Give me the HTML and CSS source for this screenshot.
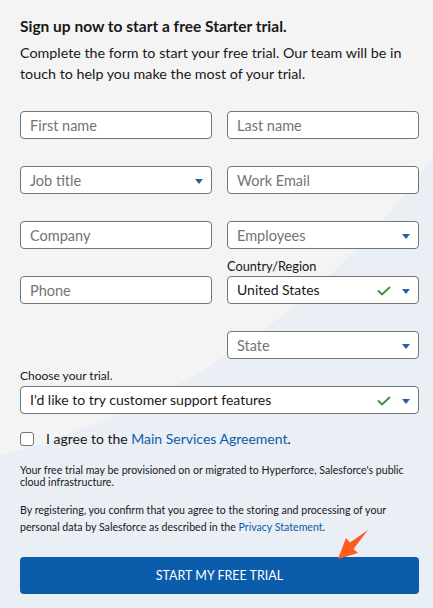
FILE: index.html
```html
<!DOCTYPE html>
<html lang="en">
<head>
<meta charset="utf-8">
<title>Sign up</title>
<link rel="stylesheet" href="styles.css">
</head>
<body>
<div class="page">
  <h1 class="title">Sign up now to start a free Starter trial.</h1>
  <p class="intro">Complete the form to start your free trial. Our team will be in touch to help you make the most of your trial.</p>

  <div class="row">
    <div class="field"><div class="box"><span class="ph">First name</span></div></div>
    <div class="field"><div class="box"><span class="ph">Last name</span></div></div>
  </div>
  <div class="row">
    <div class="field"><div class="box select"><span class="ph">Job title</span><span class="caret"></span></div></div>
    <div class="field"><div class="box"><span class="ph">Work Email</span></div></div>
  </div>
  <div class="row">
    <div class="field"><div class="box"><span class="ph">Company</span></div></div>
    <div class="field"><div class="box select"><span class="ph">Employees</span><span class="caret"></span></div></div>
  </div>
  <div class="row row-label">
    <div class="field"><div class="box"><span class="ph">Phone</span></div></div>
    <div class="field">
      <div class="label">Country/Region</div>
      <div class="box select"><span class="val">United States</span>
        <svg class="check" width="14" height="10" viewBox="0 0 14 10"><polyline points="1,4.5 5,8.5 13,1" fill="none" stroke="#3a8c3f" stroke-width="1.8"/></svg>
        <span class="caret"></span></div>
    </div>
  </div>
  <div class="row">
    <div class="field"></div>
    <div class="field"><div class="box select"><span class="ph">State</span><span class="caret"></span></div></div>
  </div>

  <div class="trial">
    <div class="label">Choose your trial.</div>
    <div class="box select"><span class="val">I'd like to try customer support features</span>
      <svg class="check" width="14" height="10" viewBox="0 0 14 10"><polyline points="1,4.5 5,8.5 13,1" fill="none" stroke="#3a8c3f" stroke-width="1.8"/></svg>
      <span class="caret"></span></div>
  </div>

  <label class="agree"><span class="cb"></span><span>I agree to the <a class="link">Main Services Agreement</a>.</span></label>

  <p class="small small-1">Your free trial may be provisioned on or migrated to Hyperforce, Salesforce's public cloud infrastructure.</p>
  <p class="small small-2">By registering, you confirm that you agree to the storing and processing of your personal data by Salesforce as described in the <a class="link">Privacy Statement</a>.</p>

  <div class="btn-wrap">
    <button class="btn">START MY FREE TRIAL</button>
    <svg class="pointer" width="34" height="34" viewBox="0 0 34 34"><polygon points="32,1 14,13.5 10,9 2,30 22,24 17.5,20" fill="#fe5b1e"/></svg>
  </div>
</div>
</body>
</html>
```
FILE: styles.css
```css
html, body {
  margin: 0;
  padding: 0;
}
body {
  width: 433px;
  height: 608px;
  overflow: hidden;
  font-family: Lato, "Noto Sans", sans-serif;
  color: #181818;
  background: radial-gradient(circle 763px at -190px -283px, #f4f4f4 99.8%, #eaeef5 100%);
}
.page {
  padding: 15px 14px 0 20px;
}
.title {
  margin: 0;
  font-size: 15.5px;
  font-weight: 700;
  line-height: 22px;
}
.intro {
  margin: 5px 0 0;
  font-size: 14.3px;
  line-height: 21px;
}
.row {
  display: flex;
  gap: 15px;
  align-items: flex-end;
  margin-top: 27px;
}
.intro + .row { margin-top: 27px; }
.row-label { margin-top: 10px; }
.field {
  width: 192px;
}
.box {
  box-sizing: border-box;
  height: 28px;
  background: #fff;
  border: 1px solid #747474;
  border-radius: 4px;
  display: flex;
  align-items: center;
  padding: 0 8px 0 9px;
  font-size: 14px;
}
.ph { color: #747474; flex: 1; padding-top: 1px; font-size: 14.5px; }
.val { color: #181818; flex: 1; padding-bottom: 2px; }
.caret {
  width: 0;
  height: 0;
  border-left: 4px solid transparent;
  border-right: 4px solid transparent;
  border-top: 5px solid #2a5fa5;
  margin-top: 2px;
}
.check { margin-right: 11px; margin-top: 1px; }
.label {
  font-size: 12px;
  line-height: 14px;
  margin-bottom: 3px;
  color: #181818;
}
.row-label .label { font-size: 12.8px; }
.trial {
  width: 399px;
  margin-top: 10px;
}
.agree {
  display: flex;
  align-items: center;
  gap: 12px;
  margin-top: 16px;
  font-size: 14px;
}
.cb {
  box-sizing: border-box;
  width: 14px;
  height: 14px;
  border: 1px solid #747474;
  border-radius: 3px;
  background: #fff;
}
.link { color: #0b5cab; text-decoration: none; }
.small {
  margin: 0;
  font-size: 10.6px;
  color: #181818;
  width: 400px;
}
.small-1 { margin-top: 17px; line-height: 12px; }
.small-2 { margin-top: 14px; line-height: 17px; }
.btn-wrap {
  position: relative;
  margin-top: 21px;
  width: 399px;
}
.btn {
  display: block;
  width: 399px;
  height: 37px;
  border: 0;
  border-radius: 4px;
  background: #0b5cab;
  color: #fff;
  font-family: Lato, "Noto Sans", sans-serif;
  font-size: 12.5px;
  letter-spacing: 0;
}
.pointer {
  position: absolute;
  left: 316px;
  top: -28px;
}
```
